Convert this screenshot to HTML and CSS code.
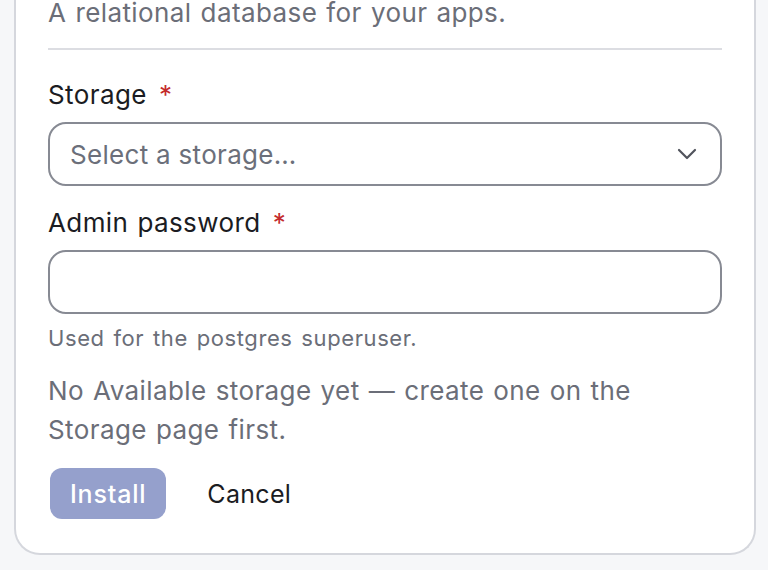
FILE: index.html
```html
<!DOCTYPE html>
<html lang="en">
<head>
<meta charset="utf-8">
<title>Install PostgreSQL</title>
<link rel="stylesheet" href="styles.css">
</head>
<body>
<div class="page">
  <div class="card">
    <p class="desc">A relational database for your apps.</p>
    <hr class="divider">
    <label class="label" for="storage">Storage <span class="req">*</span></label>
    <div class="select" id="storage">
      <span class="placeholder">Select a storage…</span>
      <svg class="chev" width="20" height="12" viewBox="0 0 20 12"><path d="M2 2 L10 10 L18 2" fill="none" stroke="#50535c" stroke-width="2.2" stroke-linecap="round" stroke-linejoin="round"/></svg>
    </div>
    <label class="label label-2" for="pw">Admin password <span class="req">*</span></label>
    <div class="input" id="pw"></div>
    <p class="help">Used for the postgres superuser.</p>
    <p class="note">No Available storage yet — create one on the Storage page first.</p>
    <div class="actions">
      <button class="btn btn-primary" disabled>Install</button>
      <button class="btn btn-ghost">Cancel</button>
    </div>
  </div>
</div>
</body>
</html>
```

FILE: styles.css
```css
* { box-sizing: border-box; }
html, body { margin: 0; padding: 0; }
body {
  background: #f6f7f9;
  font-family: Inter, "Noto Sans", sans-serif;
  color: #1b1c22;
  height: 570px;
  overflow: hidden;
}
.page {
  padding: 0 12px 0 14px;
}
.card {
  background: #ffffff;
  border: 2px solid #d5d7dd;
  border-top: none;
  border-radius: 0 0 26px 26px;
  padding: 0 32px 34px 32px;
  display: flex;
  flex-direction: column;
}
.desc {
  margin: 0;
  font-size: 26px;
  line-height: 26px;
  color: #6b6e78;
  letter-spacing: 0.4px;
  word-spacing: 1.4px;
}
.divider {
  margin: 22px 0 0 0;
  border: none;
  height: 2px;
  background: #dcdde2;
}
.label {
  display: block;
  margin-top: 28.5px;
  font-size: 26px;
  line-height: 32px;
  color: #1b1c22;
  letter-spacing: 0.4px;
  word-spacing: 1.4px;
}
.label-2 { margin-top: 20.5px; }
.req {
  color: #c42b2b;
  margin-left: 3px;
}
.select, .input {
  margin-top: 11.5px;
  height: 64px;
  border: 2px solid #878a93;
  border-radius: 18px;
  background: #fff;
}
.select {
  display: flex;
  align-items: center;
  justify-content: space-between;
  padding: 0 23px 0 20px;
}
.placeholder {
  font-size: 26px;
  color: #6b6f7a;
  letter-spacing: 0.3px;
}
.chev { display: block; }
.help {
  margin: 9px 0 0 0;
  font-size: 22px;
  line-height: 30px;
  color: #6b6e78;
  letter-spacing: 0.6px;
  word-spacing: 2px;
}
.note {
  margin: 18px 0 0 0;
  font-size: 26px;
  line-height: 39px;
  color: #6b6e78;
  letter-spacing: 0.4px;
  word-spacing: 1.4px;
}
.actions {
  margin-top: 19px;
  display: flex;
  gap: 21px;
  padding-left: 2px;
}
.btn {
  height: 51px;
  padding: 0 20px;
  border: none;
  border-radius: 12px;
  font-family: inherit;
  font-size: 25px;
  background: transparent;
  color: #1b1c22;
  letter-spacing: 0.3px;
}
.btn-primary {
  background: #95a0cc;
  color: #ffffff;
  font-weight: 500;
  letter-spacing: 0.8px;
}
```
